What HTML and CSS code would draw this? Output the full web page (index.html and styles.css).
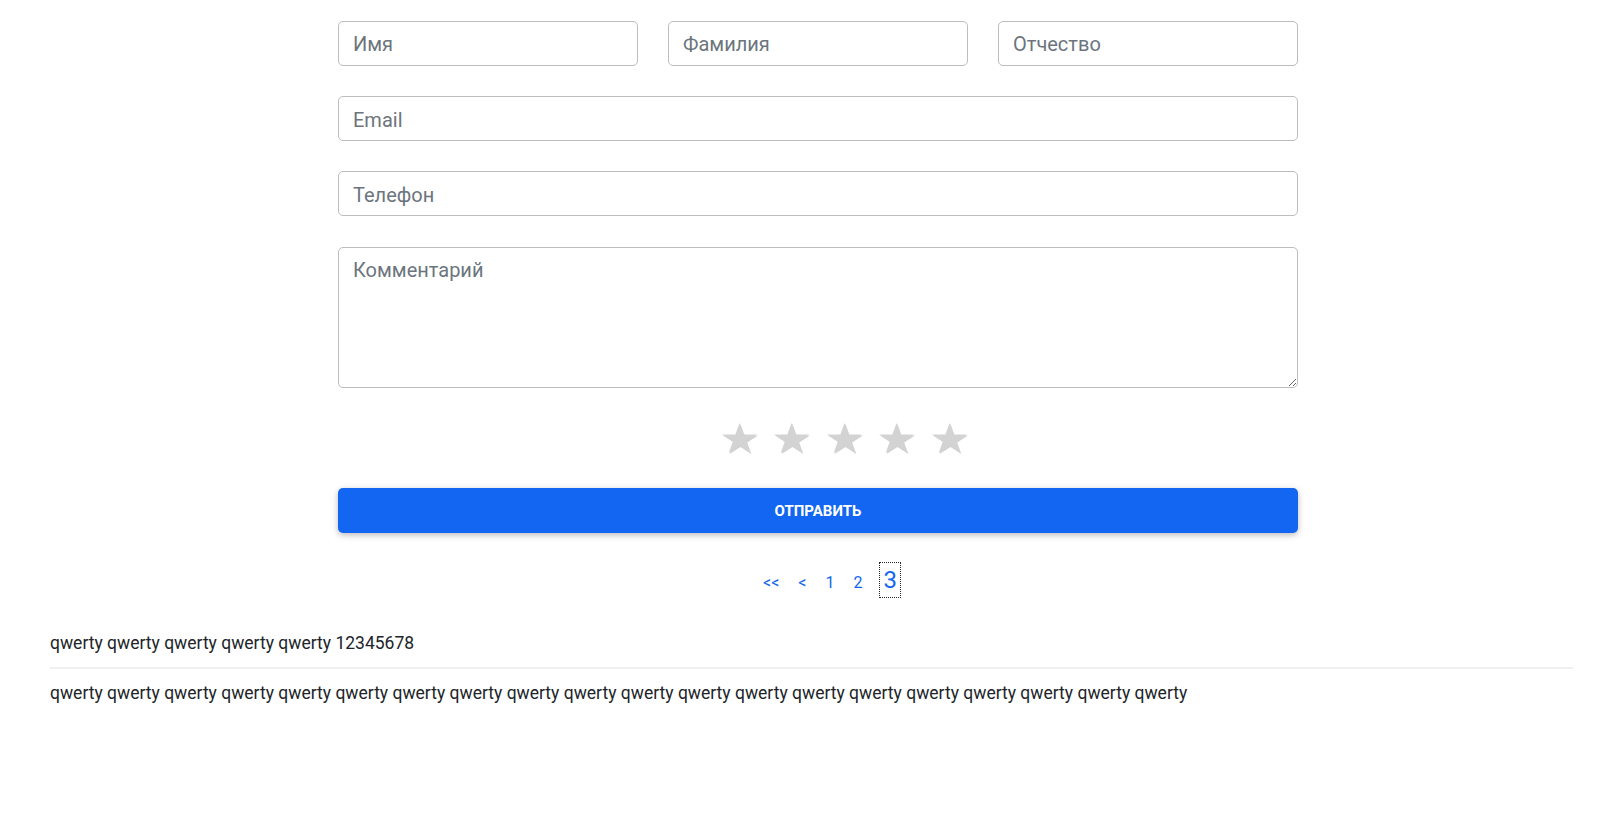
FILE: index.html
```html
<!DOCTYPE html>
<html lang="ru">
<head>
<meta charset="utf-8">
<title>Форма</title>
<link rel="stylesheet" href="styles.css">
</head>
<body>
<div class="page">
  <form class="form">
    <div class="row3">
      <input class="field" type="text" placeholder="Имя">
      <input class="field" type="text" placeholder="Фамилия">
      <input class="field" type="text" placeholder="Отчество">
    </div>
    <input class="field" type="email" placeholder="Email">
    <input class="field" type="tel" placeholder="Телефон">
    <textarea class="field area" placeholder="Комментарий"></textarea>
    <div class="stars">
      <svg class="star" viewBox="0 0 35 30"><polygon points="17.5,0 21.63,11.46 35,11.46 24.19,18.54 28.32,30 17.5,22.92 6.68,30 10.81,18.54 0,11.46 13.37,11.46"/></svg>
      <svg class="star" viewBox="0 0 35 30"><polygon points="17.5,0 21.63,11.46 35,11.46 24.19,18.54 28.32,30 17.5,22.92 6.68,30 10.81,18.54 0,11.46 13.37,11.46"/></svg>
      <svg class="star" viewBox="0 0 35 30"><polygon points="17.5,0 21.63,11.46 35,11.46 24.19,18.54 28.32,30 17.5,22.92 6.68,30 10.81,18.54 0,11.46 13.37,11.46"/></svg>
      <svg class="star" viewBox="0 0 35 30"><polygon points="17.5,0 21.63,11.46 35,11.46 24.19,18.54 28.32,30 17.5,22.92 6.68,30 10.81,18.54 0,11.46 13.37,11.46"/></svg>
      <svg class="star" viewBox="0 0 35 30"><polygon points="17.5,0 21.63,11.46 35,11.46 24.19,18.54 28.32,30 17.5,22.92 6.68,30 10.81,18.54 0,11.46 13.37,11.46"/></svg>
    </div>
    <button class="submit" type="button">Отправить</button>
    <nav class="pager">
      <a class="pg" href="#">&lt;&lt;</a>
      <a class="pg" href="#">&lt;</a>
      <a class="pg" href="#">1</a>
      <a class="pg" href="#">2</a>
      <a class="pg pg-current" href="#">3</a>
    </nav>
  </form>
  <div class="comments">
    <div class="comment">qwerty qwerty qwerty qwerty qwerty 12345678</div>
    <div class="comment">qwerty qwerty qwerty qwerty qwerty qwerty qwerty qwerty qwerty qwerty qwerty qwerty qwerty qwerty qwerty qwerty qwerty qwerty qwerty qwerty</div>
  </div>
</div>
</body>
</html>
```

FILE: styles.css
```css
* { box-sizing: border-box; }
html, body { margin: 0; padding: 0; background: #fff; }
body {
  font-family: Roboto, "Liberation Sans", sans-serif;
  color: #212529;
}
.page { padding-top: 21px; }
.form {
  width: 960px;
  margin-left: calc(50% - 473px);
  display: flex;
  flex-direction: column;
}
.row3 {
  display: flex;
  gap: 30px;
  margin-bottom: 30px;
}
.row3 .field { flex: 1 1 0; min-width: 0; }
.field {
  display: block;
  height: 45px;
  padding: 7px 14px 5px;
  font-family: Roboto, "Liberation Sans", sans-serif;
  font-size: 20px;
  line-height: 31px;
  color: #212529;
  background: #fff;
  border: 1px solid #bdbdbd;
  border-radius: 5px;
  outline: none;
  margin-bottom: 30px;
}
.row3 .field { margin-bottom: 0; padding-top: 6px; padding-bottom: 6px; }
.field::placeholder { color: #6c757d; opacity: 1; }
.area {
  height: 141px;
  resize: vertical;
  margin-bottom: 0;
  margin-top: 1px;
}
.stars {
  display: flex;
  justify-content: center;
  gap: 17.5px;
  padding-left: 52px;
  margin-top: 35px;
  height: 30px;
  margin-bottom: 35px;
}
.star {
  width: 35px;
  height: 30px;
  fill: #d3d3d3;
  filter: drop-shadow(1px 1px 0.6px rgba(0,0,0,0.18));
}
.submit {
  height: 45px;
  padding: 1px 0 0;
  border: none;
  border-radius: 5px;
  background: #1266f1;
  color: #fff;
  font-family: Roboto, "Liberation Sans", sans-serif;
  font-weight: 700;
  font-size: 15px;
  text-transform: uppercase;
  box-shadow: 0 2px 5px 0 rgba(0,0,0,0.16), 0 2px 10px 0 rgba(0,0,0,0.12);
  cursor: pointer;
}
.pager {
  display: flex;
  justify-content: center;
  align-items: baseline;
  gap: 19px;
  padding-left: 28px;
  margin-top: 29px;
}
.pg {
  font-size: 16px;
  color: #1266f1;
  text-decoration: none;
}
.pg-current {
  font-size: 24px;
  line-height: 34px;
  padding: 0 3px;
  margin-left: -2px;
  border: 1px dotted #222;
}
.comments {
  margin-top: 22px;
  padding: 0 49px 0 50px;
}
.comment {
  font-size: 17.5px;
  line-height: 26px;
  padding: 10px 0 11px;
  border-bottom: 2px solid #f0f0f0;
}
.comment:last-child { border-bottom: none; padding-top: 11px; }
```
